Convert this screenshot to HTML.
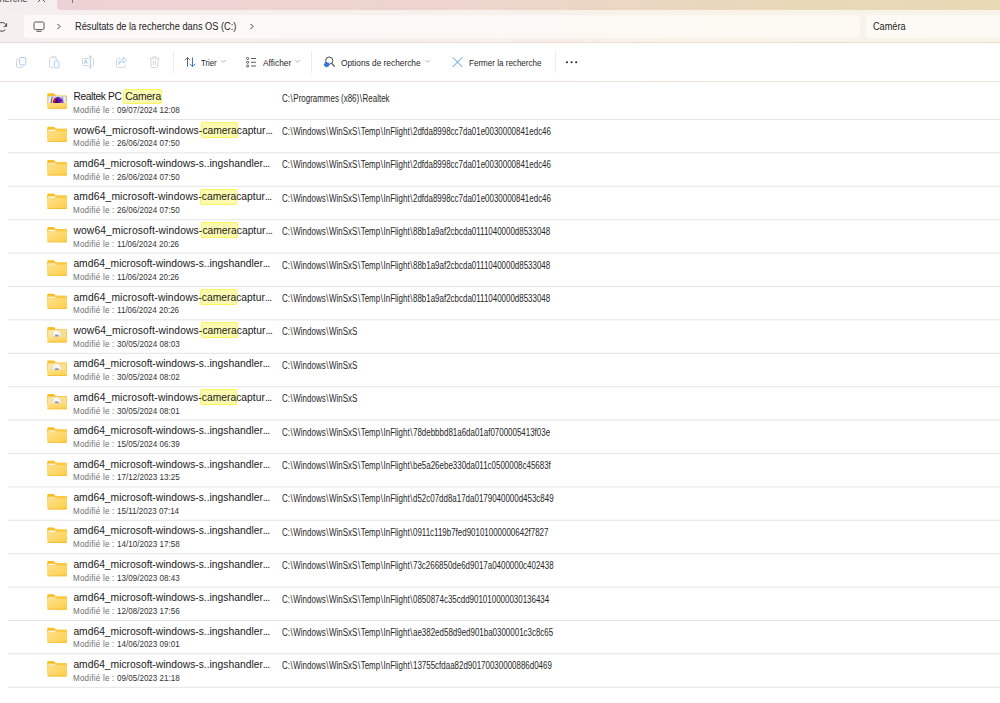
<!DOCTYPE html>
<html><head><meta charset="utf-8"><style>
html,body{margin:0;padding:0;}
body{width:1000px;height:703px;overflow:hidden;position:relative;background:#fff;font-family:"Liberation Sans",sans-serif;color:#1b1b1b;}
.abs{position:absolute;}
#tabs{position:absolute;left:0;top:0;width:1000px;height:10px;background:linear-gradient(90deg,#f5eeef 0,#f5eeef 100%);}
#strip{position:absolute;left:56.5px;top:0;width:944px;height:9.6px;border-bottom-left-radius:4px;background:linear-gradient(90deg,#edd2d5 0%,#ecd5cc 45%,#e9d8b9 75%,#e8dab5 100%);}
#toolbar{position:absolute;left:0;top:9.6px;width:1000px;height:33px;background:linear-gradient(90deg,#f6efef 0%,#f7f0ec 45%,#f8f2e7 75%,#f8f4e9 100%);}
#tbline{position:absolute;left:0;top:42px;width:1000px;height:1px;background:linear-gradient(90deg,#ead8d8 0%,#ecdad3 45%,#eddcc8 75%,#ecdec6 100%);}
#addr{position:absolute;left:24px;top:15.2px;width:836px;height:23px;border-radius:4px;background:linear-gradient(90deg,#fdf9f9 0%,#fcf8f6 45%,#fcf9f2 100%);}
#search{position:absolute;left:865.5px;top:15.2px;width:140px;height:23px;border-radius:4px;background:#fcfaf4;}
.t9{font-size:9.2px;color:#1c1c1c;white-space:pre;position:absolute;line-height:12px;}
#cmd{position:absolute;left:0;top:43px;width:1000px;height:37.5px;background:#fff;}
#cmdline{position:absolute;left:0;top:80.5px;width:1000px;height:1px;background:linear-gradient(90deg,#eddfdf 0%,#eee1dc 45%,#efe4d8 75%,#eee5d5 100%);}
.ct{position:absolute;font-size:9px;color:#1f1f1f;white-space:pre;line-height:12px;transform:scaleX(0.905);transform-origin:0 0;}
.vdiv{position:absolute;top:51px;width:1px;height:21.5px;background:#ececec;}
.row{position:absolute;left:0;width:1000px;height:33.4px;}
.ic{position:absolute;left:46px;top:7.1px;}
.nm{position:absolute;z-index:1;left:73.4px;top:4.3px;font-size:10.3px;line-height:14px;white-space:pre;color:#1a1a1a;}
.hl{position:relative;}
.hl::before{content:'';position:absolute;left:-1.8px;right:-1.2px;top:-2.75px;bottom:-2.1px;background:#fcf9b0;box-shadow:inset 0 0 0 1px #fdf45c;border-radius:2.5px;z-index:-1;}
.el{letter-spacing:-0.6px;}
.dt{position:absolute;left:73.4px;top:19.0px;font-size:9.1px;line-height:11px;white-space:pre;color:#333;transform:scaleX(0.885);transform-origin:0 0;}
.lbl{color:#707070;letter-spacing:0.25px;}
.pth{position:absolute;left:282px;top:6.6px;font-size:10px;line-height:11px;white-space:pre;color:#262626;transform:scaleX(0.795);transform-origin:0 0;}
.bs{padding:0 0.75px;}
.sep{position:absolute;left:8px;width:992px;height:1px;background:#e6e6e6;}
</style></head><body>
<div id="tabs"></div>
<div class="t9" style="right:972.4px;top:-6.9px;color:#333">Résultats de la recherche</div>
<svg class="abs" style="left:37px;top:-6px" width="9" height="9" viewBox="0 0 9 9"><path d="M1 1 L8 8 M8 1 L1 8" stroke="#444" stroke-width="0.9"/></svg>
<div id="strip"></div>
<div class="abs" style="left:71.5px;top:0;width:1px;height:2.6px;background:#777"></div>
<div id="toolbar"></div>
<div id="tbline"></div>
<svg class="abs" style="left:-4px;top:21px" width="12" height="12" viewBox="0 0 12 12"><path d="M10.3 5.2 A4.4 4.4 0 1 0 9.4 8.6" stroke="#4a4a4a" stroke-width="1" fill="none"/><path d="M10.6 2.2 L10.6 5.4 L7.6 5.4" stroke="#4a4a4a" stroke-width="1" fill="none"/></svg>
<div id="addr"></div>
<svg class="abs" style="left:32.5px;top:20.5px" width="12" height="12" viewBox="0 0 12 12"><rect x="1" y="1" width="10" height="7.6" rx="1.4" stroke="#555" stroke-width="1" fill="none"/><path d="M3.5 10.3 L8.5 10.3" stroke="#555" stroke-width="1"/></svg>
<svg class="abs" style="left:56px;top:23.4px" width="6" height="7" viewBox="0 0 6 7"><path d="M1.5 0.9 L4.1 3.5 L1.5 6.1" stroke="#3a3a3a" stroke-width="1" fill="none"/></svg>
<div class="t9" style="left:74.7px;top:20.9px;font-size:10px;transform:scaleX(0.925);transform-origin:0 0">Résultats de la recherche dans OS (C:)</div>
<svg class="abs" style="left:248.5px;top:22.8px" width="6" height="7" viewBox="0 0 6 7"><path d="M1.5 0.9 L4.1 3.5 L1.5 6.1" stroke="#3a3a3a" stroke-width="1" fill="none"/></svg>
<div id="search"></div>
<div class="t9" style="left:873px;top:20.9px;font-size:10px;transform:scaleX(0.916);transform-origin:0 0">Caméra</div>
<div id="cmd"></div>
<div id="cmdline"></div>
<!-- copy -->
<svg class="abs" style="left:15px;top:56px" width="13" height="13" viewBox="0 0 13 13"><path d="M3.2 3.2 L2.6 3.2 Q1.5 3.2 1.5 4.3 L1.5 10.2 Q1.5 11.3 2.6 11.3 L6.8 11.3 Q7.8 11.3 7.8 10.3" stroke="#d6d6d6" stroke-width="1" fill="none"/><rect x="4.6" y="1.5" width="6.2" height="7.4" rx="1.6" stroke="#a9cdf0" stroke-width="1" fill="none"/></svg>
<!-- paste -->
<svg class="abs" style="left:48px;top:55px" width="13" height="14" viewBox="0 0 13 14"><path d="M4 2.3 L2.7 2.3 Q1.6 2.3 1.6 3.4 L1.6 11.3 Q1.6 12.4 2.7 12.4 L5.5 12.4" stroke="#d6d6d6" stroke-width="1" fill="none"/><path d="M8.6 5.5 L8.6 3.4 Q8.6 2.3 7.5 2.3 L6.5 2.3" stroke="#d6d6d6" stroke-width="1" fill="none"/><rect x="4" y="1.3" width="3.5" height="1.8" rx="0.8" stroke="#d6d6d6" stroke-width="0.9" fill="none"/><rect x="6.3" y="6" width="4.6" height="6.8" rx="1.2" stroke="#a9cdf0" stroke-width="1" fill="none"/></svg>
<!-- rename -->
<svg class="abs" style="left:81px;top:55px" width="14" height="14" viewBox="0 0 14 14"><path d="M8 3.5 L2.5 3.5 Q1.5 3.5 1.5 4.5 L1.5 9.6 Q1.5 10.6 2.5 10.6 L8 10.6 M10.6 3.5 L11.5 3.5 Q12.5 3.5 12.5 4.5 L12.5 9.6 Q12.5 10.6 11.5 10.6 L10.6 10.6" stroke="#d6d6d6" stroke-width="1" fill="none"/><path d="M3.3 8.8 L4.8 4.8 L6.3 8.8 M3.8 7.4 L5.8 7.4" stroke="#a9cdf0" stroke-width="1" fill="none"/><path d="M9.3 1.2 L9.3 12.8 M8 1.2 L10.6 1.2 M8 12.8 L10.6 12.8" stroke="#a9cdf0" stroke-width="1" fill="none"/></svg>
<!-- share -->
<svg class="abs" style="left:115px;top:56px" width="13" height="13" viewBox="0 0 13 13"><path d="M5 2.6 L2.6 2.6 Q1.5 2.6 1.5 3.7 L1.5 10.3 Q1.5 11.4 2.6 11.4 L9.2 11.4 Q10.3 11.4 10.3 10.3 L10.3 8.8" stroke="#d6d6d6" stroke-width="1" fill="none"/><path d="M3.6 8.6 Q4.8 5 8.6 5 L8.6 6.9 L11.6 4 L8.6 1.1 L8.6 3 Q4.2 3.2 3.6 8.6Z" stroke="#a9cdf0" stroke-width="0.9" fill="none"/></svg>
<!-- delete -->
<svg class="abs" style="left:148px;top:55px" width="13" height="14" viewBox="0 0 13 14"><path d="M1.5 3.2 L11.5 3.2 M4.6 3 Q4.6 1.4 6.5 1.4 Q8.4 1.4 8.4 3 M2.6 3.4 L3.3 11.4 Q3.4 12.6 4.6 12.6 L8.4 12.6 Q9.6 12.6 9.7 11.4 L10.4 3.4 M5.4 5.6 L5.4 10.2 M7.6 5.6 L7.6 10.2" stroke="#d6d6d6" stroke-width="1" fill="none"/></svg>
<div class="vdiv" style="left:173px"></div>
<!-- sort -->
<svg class="abs" style="left:183px;top:56px" width="14" height="12" viewBox="0 0 14 12"><path d="M4.5 10.6 L4.5 1.6 M1.8 4.3 L4.5 1.5 L7.2 4.3" stroke="#505050" stroke-width="0.9" fill="none"/><path d="M9.5 1.4 L9.5 10.5 M6.8 7.8 L9.5 10.6 L12.2 7.8" stroke="#1a73d0" stroke-width="0.9" fill="none"/></svg>
<div class="ct" style="left:201.3px;top:57px;transform:scaleX(0.86)">Trier</div>
<svg class="abs" style="left:220px;top:59px" width="7" height="5" viewBox="0 0 7 5"><path d="M1.4 1.2 L3.5 3.3 L5.6 1.2" stroke="#9a9a9a" stroke-width="0.8" fill="none"/></svg>
<!-- view -->
<svg class="abs" style="left:245px;top:56px" width="12" height="12" viewBox="0 0 12 12"><rect x="1.5" y="1.5" width="2.2" height="2" rx="1" stroke="#4a4a4a" stroke-width="0.9" fill="none"/><rect x="1.5" y="5.3" width="2.2" height="2" rx="1" stroke="#4a4a4a" stroke-width="0.9" fill="none"/><rect x="1.5" y="9" width="2.2" height="2" rx="1" stroke="#4a4a4a" stroke-width="0.9" fill="none"/><path d="M6 2.5 L11 2.5 M6 6.3 L11 6.3 M6 10 L11 10" stroke="#4a4a4a" stroke-width="0.9"/></svg>
<div class="ct" style="left:262.8px;top:57px;transform:scaleX(0.93)">Afficher</div>
<svg class="abs" style="left:294.3px;top:59px" width="7" height="5" viewBox="0 0 7 5"><path d="M1.4 1.2 L3.5 3.3 L5.6 1.2" stroke="#9a9a9a" stroke-width="0.8" fill="none"/></svg>
<div class="vdiv" style="left:311px"></div>
<!-- search options -->
<svg class="abs" style="left:323px;top:56px" width="13" height="12" viewBox="0 0 13 12"><circle cx="6.2" cy="4.6" r="3.6" stroke="#4a4a4a" stroke-width="1" fill="none"/><path d="M8.8 7.3 L11.6 10.6" stroke="#4a4a4a" stroke-width="1.1"/><circle cx="3.6" cy="8.6" r="2.1" fill="#1a6fd0"/><path d="M3.6 5.9 L3.6 11.3 M0.9 8.6 L6.3 8.6 M1.7 6.7 L5.5 10.5 M5.5 6.7 L1.7 10.5" stroke="#1a6fd0" stroke-width="1.1"/><circle cx="3.6" cy="8.6" r="0.7" fill="#5d9be0"/></svg>
<div class="ct" style="left:341.3px;top:57px;transform:scaleX(0.925)">Options de recherche</div>
<svg class="abs" style="left:424px;top:59px" width="7" height="5" viewBox="0 0 7 5"><path d="M1.4 1.2 L3.5 3.3 L5.6 1.2" stroke="#9a9a9a" stroke-width="0.8" fill="none"/></svg>
<!-- close -->
<svg class="abs" style="left:451px;top:56px" width="13" height="12" viewBox="0 0 13 12"><path d="M1.6 1.2 L11.4 11 M11.4 1.2 L1.6 11" stroke="#4c9be6" stroke-width="1"/></svg>
<div class="ct" style="left:468.8px;top:57px;transform:scaleX(0.895)">Fermer la recherche</div>
<div class="vdiv" style="left:554.5px"></div>
<svg class="abs" style="left:565px;top:60px" width="14" height="5" viewBox="0 0 14 5"><circle cx="2" cy="2.3" r="1.05" fill="#222"/><circle cx="6.6" cy="2.3" r="1.05" fill="#222"/><circle cx="11.2" cy="2.3" r="1.05" fill="#222"/></svg>
<svg class="abs" style="left:0;top:0" width="1000" height="703" viewBox="0 0 1000 703"><defs><linearGradient id="fg" x1="0" y1="0" x2="1" y2="1"><stop offset="0" stop-color="#ffe08a"/><stop offset="0.75" stop-color="#fdd35a"/><stop offset="1" stop-color="#fcc534"/></linearGradient></defs><g transform="translate(46 92.70)">
<path d="M1.3 1.6 Q1.3 0.6 2.3 0.6 L7.2 0.6 Q7.9 0.6 8.4 1.1 L9.8 2.7 L20 2.7 Q20.9 2.7 20.9 3.6 L20.9 12 L1.3 12 Z" fill="#f9bd24"/>
<rect x="1.9" y="3.3" width="18.4" height="7.3" fill="#d4d4d6"/><path d="M2.4 10.5 L3.7 4 L5.1 4 L3.8 10.5Z" fill="#f6f6f6"/><path d="M4.5 10.5 L5.8 4 L6.6 4 L5.3 10.5Z" fill="#505050"/><path d="M17.4 4 L18.6 4 L20.2 10.5 L18.9 10.5Z" fill="#f2f2f2"/><path d="M15.8 4 L16.5 4 L17.9 10.5 L17.1 10.5Z" fill="#8a8a8a"/><path d="M6.8 10.5 Q7.6 4.4 12 4.2 Q16.2 4.2 17.2 10.5 Z" fill="#5a10b8"/><path d="M6.8 10.5 Q7.3 5.6 9.8 4.7 L10.3 10.5Z" fill="#c8103a"/><path d="M8.8 10.5 Q9.8 6.4 12.2 6.6 Q11.2 8.4 11.4 10.5Z" fill="#2a0640" opacity="0.85"/><path d="M13.8 10.5 Q14.8 7.8 16.8 8.2 L17.2 10.5Z" fill="#a040e0"/><path d="M12.6 5.4 Q14.2 5.6 14.6 6.8 Q13.4 6.6 12.6 5.4Z" fill="#b890e0"/>
<path d="M1.3 10.2 L20.9 10.2 L20.9 15.1 Q20.9 16 20 16 L2.2 16 Q1.3 16 1.3 15.1 Z" fill="url(#fg)"/>
<path d="M1.3 15.1 L20.9 15.1 Q20.9 16 20 16 L2.2 16 Q1.3 16 1.3 15.1 Z" fill="#f4b92e" opacity="0.8"/>
</g><rect x="8" y="119.00" width="992" height="1" fill="#e5e5e5"/><g transform="translate(46 126.10)">
<path d="M1.3 1.6 Q1.3 0.6 2.3 0.6 L7.2 0.6 Q7.9 0.6 8.4 1.1 L9.8 2.7 L20 2.7 Q20.9 2.7 20.9 3.6 L20.9 12 L1.3 12 Z" fill="#f9bd24"/>
<rect x="1.3" y="2.7" width="19.6" height="3" fill="#fccb45"/><rect x="2.3" y="3.7" width="7.2" height="1.4" rx="0.5" fill="#f1f1ee"/>
<path d="M1.3 5.1 L20.9 5.1 L20.9 15.1 Q20.9 16 20 16 L2.2 16 Q1.3 16 1.3 15.1 Z" fill="url(#fg)"/>
<path d="M1.3 15.1 L20.9 15.1 Q20.9 16 20 16 L2.2 16 Q1.3 16 1.3 15.1 Z" fill="#f4b92e" opacity="0.8"/>
</g><rect x="8" y="152.40" width="992" height="1" fill="#e5e5e5"/><g transform="translate(46 159.50)">
<path d="M1.3 1.6 Q1.3 0.6 2.3 0.6 L7.2 0.6 Q7.9 0.6 8.4 1.1 L9.8 2.7 L20 2.7 Q20.9 2.7 20.9 3.6 L20.9 12 L1.3 12 Z" fill="#f9bd24"/>
<rect x="1.3" y="2.7" width="19.6" height="3" fill="#fccb45"/><rect x="2.3" y="3.7" width="7.2" height="1.4" rx="0.5" fill="#f1f1ee"/>
<path d="M1.3 5.1 L20.9 5.1 L20.9 15.1 Q20.9 16 20 16 L2.2 16 Q1.3 16 1.3 15.1 Z" fill="url(#fg)"/>
<path d="M1.3 15.1 L20.9 15.1 Q20.9 16 20 16 L2.2 16 Q1.3 16 1.3 15.1 Z" fill="#f4b92e" opacity="0.8"/>
</g><rect x="8" y="185.80" width="992" height="1" fill="#e5e5e5"/><g transform="translate(46 192.90)">
<path d="M1.3 1.6 Q1.3 0.6 2.3 0.6 L7.2 0.6 Q7.9 0.6 8.4 1.1 L9.8 2.7 L20 2.7 Q20.9 2.7 20.9 3.6 L20.9 12 L1.3 12 Z" fill="#f9bd24"/>
<rect x="1.3" y="2.7" width="19.6" height="3" fill="#fccb45"/><rect x="2.3" y="3.7" width="7.2" height="1.4" rx="0.5" fill="#f1f1ee"/>
<path d="M1.3 5.1 L20.9 5.1 L20.9 15.1 Q20.9 16 20 16 L2.2 16 Q1.3 16 1.3 15.1 Z" fill="url(#fg)"/>
<path d="M1.3 15.1 L20.9 15.1 Q20.9 16 20 16 L2.2 16 Q1.3 16 1.3 15.1 Z" fill="#f4b92e" opacity="0.8"/>
</g><rect x="8" y="219.20" width="992" height="1" fill="#e5e5e5"/><g transform="translate(46 226.30)">
<path d="M1.3 1.6 Q1.3 0.6 2.3 0.6 L7.2 0.6 Q7.9 0.6 8.4 1.1 L9.8 2.7 L20 2.7 Q20.9 2.7 20.9 3.6 L20.9 12 L1.3 12 Z" fill="#f9bd24"/>
<rect x="1.3" y="2.7" width="19.6" height="3" fill="#fccb45"/><rect x="2.3" y="3.7" width="7.2" height="1.4" rx="0.5" fill="#f1f1ee"/>
<path d="M1.3 5.1 L20.9 5.1 L20.9 15.1 Q20.9 16 20 16 L2.2 16 Q1.3 16 1.3 15.1 Z" fill="url(#fg)"/>
<path d="M1.3 15.1 L20.9 15.1 Q20.9 16 20 16 L2.2 16 Q1.3 16 1.3 15.1 Z" fill="#f4b92e" opacity="0.8"/>
</g><rect x="8" y="252.60" width="992" height="1" fill="#e5e5e5"/><g transform="translate(46 259.70)">
<path d="M1.3 1.6 Q1.3 0.6 2.3 0.6 L7.2 0.6 Q7.9 0.6 8.4 1.1 L9.8 2.7 L20 2.7 Q20.9 2.7 20.9 3.6 L20.9 12 L1.3 12 Z" fill="#f9bd24"/>
<rect x="1.3" y="2.7" width="19.6" height="3" fill="#fccb45"/><rect x="2.3" y="3.7" width="7.2" height="1.4" rx="0.5" fill="#f1f1ee"/>
<path d="M1.3 5.1 L20.9 5.1 L20.9 15.1 Q20.9 16 20 16 L2.2 16 Q1.3 16 1.3 15.1 Z" fill="url(#fg)"/>
<path d="M1.3 15.1 L20.9 15.1 Q20.9 16 20 16 L2.2 16 Q1.3 16 1.3 15.1 Z" fill="#f4b92e" opacity="0.8"/>
</g><rect x="8" y="286.00" width="992" height="1" fill="#e5e5e5"/><g transform="translate(46 293.10)">
<path d="M1.3 1.6 Q1.3 0.6 2.3 0.6 L7.2 0.6 Q7.9 0.6 8.4 1.1 L9.8 2.7 L20 2.7 Q20.9 2.7 20.9 3.6 L20.9 12 L1.3 12 Z" fill="#f9bd24"/>
<rect x="1.3" y="2.7" width="19.6" height="3" fill="#fccb45"/><rect x="2.3" y="3.7" width="7.2" height="1.4" rx="0.5" fill="#f1f1ee"/>
<path d="M1.3 5.1 L20.9 5.1 L20.9 15.1 Q20.9 16 20 16 L2.2 16 Q1.3 16 1.3 15.1 Z" fill="url(#fg)"/>
<path d="M1.3 15.1 L20.9 15.1 Q20.9 16 20 16 L2.2 16 Q1.3 16 1.3 15.1 Z" fill="#f4b92e" opacity="0.8"/>
</g><rect x="8" y="319.40" width="992" height="1" fill="#e5e5e5"/><g transform="translate(46 326.50)">
<path d="M1.3 1.6 Q1.3 0.6 2.3 0.6 L7.2 0.6 Q7.9 0.6 8.4 1.1 L9.8 2.7 L20 2.7 Q20.9 2.7 20.9 3.6 L20.9 12 L1.3 12 Z" fill="#f9bd24"/>
<rect x="1.9" y="3.3" width="18.4" height="7.5" fill="#f8df98"/><rect x="2.3" y="3.7" width="5" height="6.5" fill="#fae3a8"/><path d="M7.6 4.3 L11.8 4.3 L14.2 6.6 L14.2 10.5 L7.6 10.5 Z" fill="#f7f8fb"/><path d="M8.2 10.3 L10 7.5 L11.3 8.8 L12.3 8 L13.4 10.3 Z" fill="#8a96ad"/>
<path d="M1.3 10.2 L20.9 10.2 L20.9 15.1 Q20.9 16 20 16 L2.2 16 Q1.3 16 1.3 15.1 Z" fill="url(#fg)"/>
<path d="M1.3 15.1 L20.9 15.1 Q20.9 16 20 16 L2.2 16 Q1.3 16 1.3 15.1 Z" fill="#f4b92e" opacity="0.8"/>
</g><rect x="8" y="352.80" width="992" height="1" fill="#e5e5e5"/><g transform="translate(46 359.90)">
<path d="M1.3 1.6 Q1.3 0.6 2.3 0.6 L7.2 0.6 Q7.9 0.6 8.4 1.1 L9.8 2.7 L20 2.7 Q20.9 2.7 20.9 3.6 L20.9 12 L1.3 12 Z" fill="#f9bd24"/>
<rect x="1.9" y="3.3" width="18.4" height="7.5" fill="#f8df98"/><rect x="2.3" y="3.7" width="5" height="6.5" fill="#fae3a8"/><path d="M7.6 4.3 L11.8 4.3 L14.2 6.6 L14.2 10.5 L7.6 10.5 Z" fill="#f7f8fb"/><path d="M8.2 10.3 L10 7.5 L11.3 8.8 L12.3 8 L13.4 10.3 Z" fill="#8a96ad"/>
<path d="M1.3 10.2 L20.9 10.2 L20.9 15.1 Q20.9 16 20 16 L2.2 16 Q1.3 16 1.3 15.1 Z" fill="url(#fg)"/>
<path d="M1.3 15.1 L20.9 15.1 Q20.9 16 20 16 L2.2 16 Q1.3 16 1.3 15.1 Z" fill="#f4b92e" opacity="0.8"/>
</g><rect x="8" y="386.20" width="992" height="1" fill="#e5e5e5"/><g transform="translate(46 393.30)">
<path d="M1.3 1.6 Q1.3 0.6 2.3 0.6 L7.2 0.6 Q7.9 0.6 8.4 1.1 L9.8 2.7 L20 2.7 Q20.9 2.7 20.9 3.6 L20.9 12 L1.3 12 Z" fill="#f9bd24"/>
<rect x="1.9" y="3.3" width="18.4" height="7.5" fill="#f8df98"/><rect x="2.3" y="3.7" width="5" height="6.5" fill="#fae3a8"/><path d="M7.6 4.3 L11.8 4.3 L14.2 6.6 L14.2 10.5 L7.6 10.5 Z" fill="#f7f8fb"/><path d="M8.2 10.3 L10 7.5 L11.3 8.8 L12.3 8 L13.4 10.3 Z" fill="#8a96ad"/>
<path d="M1.3 10.2 L20.9 10.2 L20.9 15.1 Q20.9 16 20 16 L2.2 16 Q1.3 16 1.3 15.1 Z" fill="url(#fg)"/>
<path d="M1.3 15.1 L20.9 15.1 Q20.9 16 20 16 L2.2 16 Q1.3 16 1.3 15.1 Z" fill="#f4b92e" opacity="0.8"/>
</g><rect x="8" y="419.60" width="992" height="1" fill="#e5e5e5"/><g transform="translate(46 426.70)">
<path d="M1.3 1.6 Q1.3 0.6 2.3 0.6 L7.2 0.6 Q7.9 0.6 8.4 1.1 L9.8 2.7 L20 2.7 Q20.9 2.7 20.9 3.6 L20.9 12 L1.3 12 Z" fill="#f9bd24"/>
<rect x="1.3" y="2.7" width="19.6" height="3" fill="#fccb45"/><rect x="2.3" y="3.7" width="7.2" height="1.4" rx="0.5" fill="#f1f1ee"/>
<path d="M1.3 5.1 L20.9 5.1 L20.9 15.1 Q20.9 16 20 16 L2.2 16 Q1.3 16 1.3 15.1 Z" fill="url(#fg)"/>
<path d="M1.3 15.1 L20.9 15.1 Q20.9 16 20 16 L2.2 16 Q1.3 16 1.3 15.1 Z" fill="#f4b92e" opacity="0.8"/>
</g><rect x="8" y="453.00" width="992" height="1" fill="#e5e5e5"/><g transform="translate(46 460.10)">
<path d="M1.3 1.6 Q1.3 0.6 2.3 0.6 L7.2 0.6 Q7.9 0.6 8.4 1.1 L9.8 2.7 L20 2.7 Q20.9 2.7 20.9 3.6 L20.9 12 L1.3 12 Z" fill="#f9bd24"/>
<rect x="1.3" y="2.7" width="19.6" height="3" fill="#fccb45"/><rect x="2.3" y="3.7" width="7.2" height="1.4" rx="0.5" fill="#f1f1ee"/>
<path d="M1.3 5.1 L20.9 5.1 L20.9 15.1 Q20.9 16 20 16 L2.2 16 Q1.3 16 1.3 15.1 Z" fill="url(#fg)"/>
<path d="M1.3 15.1 L20.9 15.1 Q20.9 16 20 16 L2.2 16 Q1.3 16 1.3 15.1 Z" fill="#f4b92e" opacity="0.8"/>
</g><rect x="8" y="486.40" width="992" height="1" fill="#e5e5e5"/><g transform="translate(46 493.50)">
<path d="M1.3 1.6 Q1.3 0.6 2.3 0.6 L7.2 0.6 Q7.9 0.6 8.4 1.1 L9.8 2.7 L20 2.7 Q20.9 2.7 20.9 3.6 L20.9 12 L1.3 12 Z" fill="#f9bd24"/>
<rect x="1.3" y="2.7" width="19.6" height="3" fill="#fccb45"/><rect x="2.3" y="3.7" width="7.2" height="1.4" rx="0.5" fill="#f1f1ee"/>
<path d="M1.3 5.1 L20.9 5.1 L20.9 15.1 Q20.9 16 20 16 L2.2 16 Q1.3 16 1.3 15.1 Z" fill="url(#fg)"/>
<path d="M1.3 15.1 L20.9 15.1 Q20.9 16 20 16 L2.2 16 Q1.3 16 1.3 15.1 Z" fill="#f4b92e" opacity="0.8"/>
</g><rect x="8" y="519.80" width="992" height="1" fill="#e5e5e5"/><g transform="translate(46 526.90)">
<path d="M1.3 1.6 Q1.3 0.6 2.3 0.6 L7.2 0.6 Q7.9 0.6 8.4 1.1 L9.8 2.7 L20 2.7 Q20.9 2.7 20.9 3.6 L20.9 12 L1.3 12 Z" fill="#f9bd24"/>
<rect x="1.3" y="2.7" width="19.6" height="3" fill="#fccb45"/><rect x="2.3" y="3.7" width="7.2" height="1.4" rx="0.5" fill="#f1f1ee"/>
<path d="M1.3 5.1 L20.9 5.1 L20.9 15.1 Q20.9 16 20 16 L2.2 16 Q1.3 16 1.3 15.1 Z" fill="url(#fg)"/>
<path d="M1.3 15.1 L20.9 15.1 Q20.9 16 20 16 L2.2 16 Q1.3 16 1.3 15.1 Z" fill="#f4b92e" opacity="0.8"/>
</g><rect x="8" y="553.20" width="992" height="1" fill="#e5e5e5"/><g transform="translate(46 560.30)">
<path d="M1.3 1.6 Q1.3 0.6 2.3 0.6 L7.2 0.6 Q7.9 0.6 8.4 1.1 L9.8 2.7 L20 2.7 Q20.9 2.7 20.9 3.6 L20.9 12 L1.3 12 Z" fill="#f9bd24"/>
<rect x="1.3" y="2.7" width="19.6" height="3" fill="#fccb45"/><rect x="2.3" y="3.7" width="7.2" height="1.4" rx="0.5" fill="#f1f1ee"/>
<path d="M1.3 5.1 L20.9 5.1 L20.9 15.1 Q20.9 16 20 16 L2.2 16 Q1.3 16 1.3 15.1 Z" fill="url(#fg)"/>
<path d="M1.3 15.1 L20.9 15.1 Q20.9 16 20 16 L2.2 16 Q1.3 16 1.3 15.1 Z" fill="#f4b92e" opacity="0.8"/>
</g><rect x="8" y="586.60" width="992" height="1" fill="#e5e5e5"/><g transform="translate(46 593.70)">
<path d="M1.3 1.6 Q1.3 0.6 2.3 0.6 L7.2 0.6 Q7.9 0.6 8.4 1.1 L9.8 2.7 L20 2.7 Q20.9 2.7 20.9 3.6 L20.9 12 L1.3 12 Z" fill="#f9bd24"/>
<rect x="1.3" y="2.7" width="19.6" height="3" fill="#fccb45"/><rect x="2.3" y="3.7" width="7.2" height="1.4" rx="0.5" fill="#f1f1ee"/>
<path d="M1.3 5.1 L20.9 5.1 L20.9 15.1 Q20.9 16 20 16 L2.2 16 Q1.3 16 1.3 15.1 Z" fill="url(#fg)"/>
<path d="M1.3 15.1 L20.9 15.1 Q20.9 16 20 16 L2.2 16 Q1.3 16 1.3 15.1 Z" fill="#f4b92e" opacity="0.8"/>
</g><rect x="8" y="620.00" width="992" height="1" fill="#e5e5e5"/><g transform="translate(46 627.10)">
<path d="M1.3 1.6 Q1.3 0.6 2.3 0.6 L7.2 0.6 Q7.9 0.6 8.4 1.1 L9.8 2.7 L20 2.7 Q20.9 2.7 20.9 3.6 L20.9 12 L1.3 12 Z" fill="#f9bd24"/>
<rect x="1.3" y="2.7" width="19.6" height="3" fill="#fccb45"/><rect x="2.3" y="3.7" width="7.2" height="1.4" rx="0.5" fill="#f1f1ee"/>
<path d="M1.3 5.1 L20.9 5.1 L20.9 15.1 Q20.9 16 20 16 L2.2 16 Q1.3 16 1.3 15.1 Z" fill="url(#fg)"/>
<path d="M1.3 15.1 L20.9 15.1 Q20.9 16 20 16 L2.2 16 Q1.3 16 1.3 15.1 Z" fill="#f4b92e" opacity="0.8"/>
</g><rect x="8" y="653.40" width="992" height="1" fill="#e5e5e5"/><g transform="translate(46 660.50)">
<path d="M1.3 1.6 Q1.3 0.6 2.3 0.6 L7.2 0.6 Q7.9 0.6 8.4 1.1 L9.8 2.7 L20 2.7 Q20.9 2.7 20.9 3.6 L20.9 12 L1.3 12 Z" fill="#f9bd24"/>
<rect x="1.3" y="2.7" width="19.6" height="3" fill="#fccb45"/><rect x="2.3" y="3.7" width="7.2" height="1.4" rx="0.5" fill="#f1f1ee"/>
<path d="M1.3 5.1 L20.9 5.1 L20.9 15.1 Q20.9 16 20 16 L2.2 16 Q1.3 16 1.3 15.1 Z" fill="url(#fg)"/>
<path d="M1.3 15.1 L20.9 15.1 Q20.9 16 20 16 L2.2 16 Q1.3 16 1.3 15.1 Z" fill="#f4b92e" opacity="0.8"/>
</g><rect x="8" y="686.80" width="992" height="1" fill="#e5e5e5"/></svg>
<div class="row" style="top:86.00px"><div class="nm"><span style="letter-spacing:-0.4px">Realtek PC</span><span style="margin-right:0.9px"> </span><span class="hl" style="letter-spacing:-0.15px">Camera</span></div><div class="dt"><span class="lbl">Modifié le : </span>09/07/2024 12:08</div><div class="pth">C:<span class="bs">\</span>Programmes (x86)<span class="bs">\</span>Realtek</div></div>
<div class="row" style="top:119.40px"><div class="nm"><span style="letter-spacing:0.13px">wow64_microsoft-windows-</span><span class="hl">camera</span>captur<span class="el">...</span></div><div class="dt"><span class="lbl">Modifié le : </span>26/06/2024 07:50</div><div class="pth">C:<span class="bs">\</span>Windows<span class="bs">\</span>WinSxS<span class="bs">\</span>Temp<span class="bs">\</span>InFlight<span class="bs">\</span>2dfda8998cc7da01e0030000841edc46</div></div>
<div class="row" style="top:152.80px"><div class="nm">amd64_microsoft-windows-s..ingshandler<span class="el">...</span></div><div class="dt"><span class="lbl">Modifié le : </span>26/06/2024 07:50</div><div class="pth">C:<span class="bs">\</span>Windows<span class="bs">\</span>WinSxS<span class="bs">\</span>Temp<span class="bs">\</span>InFlight<span class="bs">\</span>2dfda8998cc7da01e0030000841edc46</div></div>
<div class="row" style="top:186.20px"><div class="nm"><span style="letter-spacing:0.13px">amd64_microsoft-windows-</span><span class="hl">camera</span>captur<span class="el">...</span></div><div class="dt"><span class="lbl">Modifié le : </span>26/06/2024 07:50</div><div class="pth">C:<span class="bs">\</span>Windows<span class="bs">\</span>WinSxS<span class="bs">\</span>Temp<span class="bs">\</span>InFlight<span class="bs">\</span>2dfda8998cc7da01e0030000841edc46</div></div>
<div class="row" style="top:219.60px"><div class="nm"><span style="letter-spacing:0.13px">wow64_microsoft-windows-</span><span class="hl">camera</span>captur<span class="el">...</span></div><div class="dt"><span class="lbl">Modifié le : </span>11/06/2024 20:26</div><div class="pth">C:<span class="bs">\</span>Windows<span class="bs">\</span>WinSxS<span class="bs">\</span>Temp<span class="bs">\</span>InFlight<span class="bs">\</span>88b1a9af2cbcda0111040000d8533048</div></div>
<div class="row" style="top:253.00px"><div class="nm">amd64_microsoft-windows-s..ingshandler<span class="el">...</span></div><div class="dt"><span class="lbl">Modifié le : </span>11/06/2024 20:26</div><div class="pth">C:<span class="bs">\</span>Windows<span class="bs">\</span>WinSxS<span class="bs">\</span>Temp<span class="bs">\</span>InFlight<span class="bs">\</span>88b1a9af2cbcda0111040000d8533048</div></div>
<div class="row" style="top:286.40px"><div class="nm"><span style="letter-spacing:0.13px">amd64_microsoft-windows-</span><span class="hl">camera</span>captur<span class="el">...</span></div><div class="dt"><span class="lbl">Modifié le : </span>11/06/2024 20:26</div><div class="pth">C:<span class="bs">\</span>Windows<span class="bs">\</span>WinSxS<span class="bs">\</span>Temp<span class="bs">\</span>InFlight<span class="bs">\</span>88b1a9af2cbcda0111040000d8533048</div></div>
<div class="row" style="top:319.80px"><div class="nm"><span style="letter-spacing:0.13px">wow64_microsoft-windows-</span><span class="hl">camera</span>captur<span class="el">...</span></div><div class="dt"><span class="lbl">Modifié le : </span>30/05/2024 08:03</div><div class="pth">C:<span class="bs">\</span>Windows<span class="bs">\</span>WinSxS</div></div>
<div class="row" style="top:353.20px"><div class="nm">amd64_microsoft-windows-s..ingshandler<span class="el">...</span></div><div class="dt"><span class="lbl">Modifié le : </span>30/05/2024 08:02</div><div class="pth">C:<span class="bs">\</span>Windows<span class="bs">\</span>WinSxS</div></div>
<div class="row" style="top:386.60px"><div class="nm"><span style="letter-spacing:0.13px">amd64_microsoft-windows-</span><span class="hl">camera</span>captur<span class="el">...</span></div><div class="dt"><span class="lbl">Modifié le : </span>30/05/2024 08:01</div><div class="pth">C:<span class="bs">\</span>Windows<span class="bs">\</span>WinSxS</div></div>
<div class="row" style="top:420.00px"><div class="nm">amd64_microsoft-windows-s..ingshandler<span class="el">...</span></div><div class="dt"><span class="lbl">Modifié le : </span>15/05/2024 06:39</div><div class="pth">C:<span class="bs">\</span>Windows<span class="bs">\</span>WinSxS<span class="bs">\</span>Temp<span class="bs">\</span>InFlight<span class="bs">\</span>78debbbd81a6da01af0700005413f03e</div></div>
<div class="row" style="top:453.40px"><div class="nm">amd64_microsoft-windows-s..ingshandler<span class="el">...</span></div><div class="dt"><span class="lbl">Modifié le : </span>17/12/2023 13:25</div><div class="pth">C:<span class="bs">\</span>Windows<span class="bs">\</span>WinSxS<span class="bs">\</span>Temp<span class="bs">\</span>InFlight<span class="bs">\</span>be5a26ebe330da011c0500008c45683f</div></div>
<div class="row" style="top:486.80px"><div class="nm">amd64_microsoft-windows-s..ingshandler<span class="el">...</span></div><div class="dt"><span class="lbl">Modifié le : </span>15/11/2023 07:14</div><div class="pth">C:<span class="bs">\</span>Windows<span class="bs">\</span>WinSxS<span class="bs">\</span>Temp<span class="bs">\</span>InFlight<span class="bs">\</span>d52c07dd8a17da0179040000d453c849</div></div>
<div class="row" style="top:520.20px"><div class="nm">amd64_microsoft-windows-s..ingshandler<span class="el">...</span></div><div class="dt"><span class="lbl">Modifié le : </span>14/10/2023 17:58</div><div class="pth">C:<span class="bs">\</span>Windows<span class="bs">\</span>WinSxS<span class="bs">\</span>Temp<span class="bs">\</span>InFlight<span class="bs">\</span>0911c119b7fed90101000000642f7827</div></div>
<div class="row" style="top:553.60px"><div class="nm">amd64_microsoft-windows-s..ingshandler<span class="el">...</span></div><div class="dt"><span class="lbl">Modifié le : </span>13/09/2023 08:43</div><div class="pth">C:<span class="bs">\</span>Windows<span class="bs">\</span>WinSxS<span class="bs">\</span>Temp<span class="bs">\</span>InFlight<span class="bs">\</span>73c266850de6d9017a0400000c402438</div></div>
<div class="row" style="top:587.00px"><div class="nm">amd64_microsoft-windows-s..ingshandler<span class="el">...</span></div><div class="dt"><span class="lbl">Modifié le : </span>12/08/2023 17:56</div><div class="pth">C:<span class="bs">\</span>Windows<span class="bs">\</span>WinSxS<span class="bs">\</span>Temp<span class="bs">\</span>InFlight<span class="bs">\</span>0850874c35cdd901010000030136434</div></div>
<div class="row" style="top:620.40px"><div class="nm">amd64_microsoft-windows-s..ingshandler<span class="el">...</span></div><div class="dt"><span class="lbl">Modifié le : </span>14/06/2023 09:01</div><div class="pth">C:<span class="bs">\</span>Windows<span class="bs">\</span>WinSxS<span class="bs">\</span>Temp<span class="bs">\</span>InFlight<span class="bs">\</span>ae382ed58d9ed901ba0300001c3c8c65</div></div>
<div class="row" style="top:653.80px"><div class="nm">amd64_microsoft-windows-s..ingshandler<span class="el">...</span></div><div class="dt"><span class="lbl">Modifié le : </span>09/05/2023 21:18</div><div class="pth">C:<span class="bs">\</span>Windows<span class="bs">\</span>WinSxS<span class="bs">\</span>Temp<span class="bs">\</span>InFlight<span class="bs">\</span>13755cfdaa82d90170030000886d0469</div></div>
</body></html>
